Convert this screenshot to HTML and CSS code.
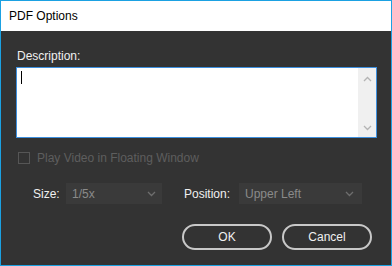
FILE: index.html
```html
<!doctype html>
<html lang="en">
  <head>
    <meta charset="utf-8" />
    <title>PDF Options</title>
    <link rel="stylesheet" href="styles.css">
  </head>
  <body>
    <div class="window">
      <div class="titlebar">PDF Options</div>
      <div class="content">
        <div class="label">Description:</div>
        <div class="textbox">
          <div class="text_area"><span class="caret"></span></div>
          <div class="scrollbar">
            <svg width="9" height="6" viewBox="0 0 9 6"><path d="M1 5 L4.5 1.5 L8 5" fill="none" stroke="#b4b4b4" stroke-width="1.3"/></svg>
            <svg width="9" height="6" viewBox="0 0 9 6"><path d="M1 1 L4.5 4.5 L8 1" fill="none" stroke="#b4b4b4" stroke-width="1.3"/></svg>
          </div>
        </div>
        <div class="check_row">
          <span class="checkbox"></span>
          <span class="disabled">Play Video in Floating Window</span>
        </div>
        <div class="select_row">
          <span class="select_label size_label">Size:</span>
          <div class="select size_select">
            <span>1/5x</span>
            <svg width="9" height="6" viewBox="0 0 9 6"><path d="M1 1 L4.5 4.5 L8 1" fill="none" stroke="#6e6e6e" stroke-width="1.3"/></svg>
          </div>
          <span class="select_label pos_label">Position:</span>
          <div class="select pos_select">
            <span>Upper Left</span>
            <svg width="9" height="6" viewBox="0 0 9 6"><path d="M1 1 L4.5 4.5 L8 1" fill="none" stroke="#6e6e6e" stroke-width="1.3"/></svg>
          </div>
        </div>
        <div class="button_row">
          <button class="btn">OK</button>
          <button class="btn">Cancel</button>
        </div>
      </div>
    </div>
  </body>
</html>
```

FILE: styles.css
```css
/* whole page */
body{
  margin: 0;
  font-family: "Liberation Sans", Arial, sans-serif;
  font-size: 12px;
}
/* dialog frame */
.window{
  width: 392px;
  height: 266px;
  box-sizing: border-box;
  border: 1px solid #1ba1e2;
  display: flex;
  flex-direction: column;
}
.titlebar{
  height: 30px;
  line-height: 30px;
  padding-left: 8px;
  background-color: #fff;
  color: #000;
}
.content{
  flex: 1;
  background-color: #333;
  color: #f0f0f0;
  padding: 17px 0 0 15px;
}
.label{
  line-height: 16px;
  padding-left: 1px;
}
/* description box */
.textbox{
  margin-top: 3px;
  width: 361px;
  height: 71px;
  box-sizing: border-box;
  border: 1px solid #3d8fde;
  background-color: #fff;
  display: flex;
}
.text_area{
  flex: 1;
  padding: 3px 0 0 4px;
}
.caret{
  display: block;
  width: 1px;
  height: 13px;
  background-color: #000;
}
.scrollbar{
  width: 18px;
  background-color: #f0f0f0;
  display: flex;
  flex-direction: column;
  justify-content: space-between;
  align-items: center;
  padding: 8px 0 6px 0;
}
/* checkbox row */
.check_row{
  margin-top: 12px;
  display: flex;
  align-items: center;
  padding-left: 2px;
  line-height: 16px;
}
.checkbox{
  width: 10px;
  height: 10px;
  border: 1px solid #565656;
  margin-right: 7px;
}
.disabled{
  color: #5e5e5e;
}
/* select row */
.select_row{
  margin-top: 17px;
  display: flex;
  align-items: center;
}
.select_label{
  line-height: 16px;
}
.size_label{
  margin-left: 17px;
  width: 33px;
}
.pos_label{
  margin-left: 22px;
  width: 55px;
}
.select{
  height: 21px;
  background-color: #3a3a3a;
  color: #8a8a8a;
  display: flex;
  align-items: center;
  justify-content: space-between;
  padding: 0 6px 0 6px;
  box-sizing: border-box;
}
.size_select{
  width: 96px;
}
.pos_select{
  width: 123px;
  padding-right: 8px;
}
/* buttons */
.button_row{
  margin-top: 20px;
  display: flex;
  justify-content: flex-end;
  gap: 10px;
  padding-right: 19px;
}
.btn{
  width: 90px;
  height: 26px;
  border: 2px solid #c8c8c8;
  border-radius: 13px;
  background-color: #333;
  color: #f0f0f0;
  font-family: "Liberation Sans", Arial, sans-serif;
  font-size: 12px;
  padding: 0;
}
```
